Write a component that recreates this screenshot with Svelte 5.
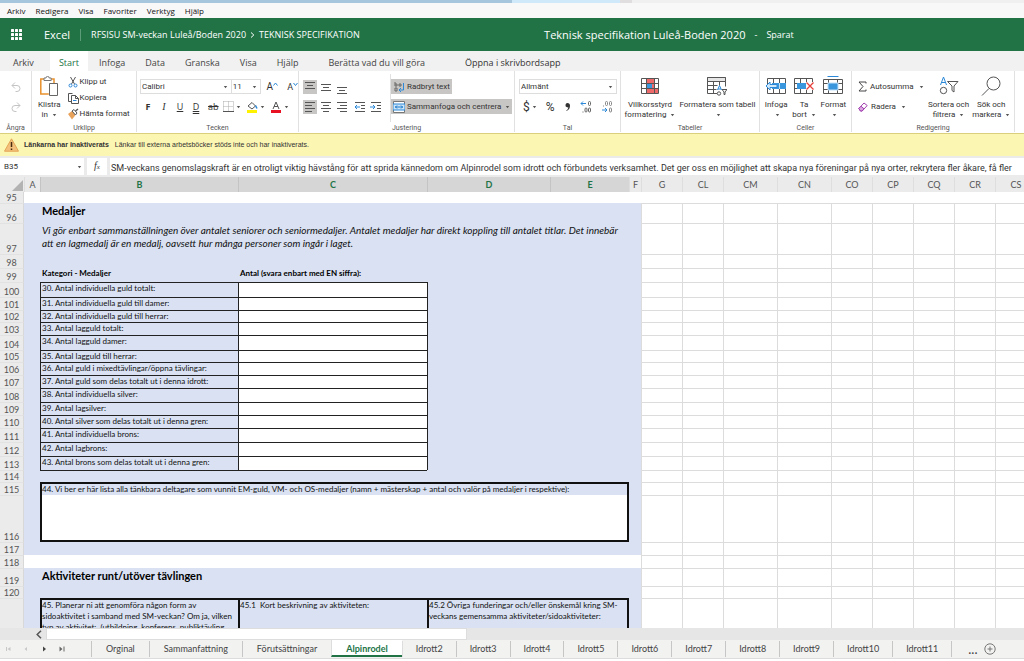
<script>
  const menus = ['Arkiv', 'Redigera', 'Visa', 'Favoriter', 'Verktyg', 'Hjälp'];
  const ribbonTabs = ['Arkiv', 'Start', 'Infoga', 'Data', 'Granska', 'Visa', 'Hjälp'];
  const sheets = ['Orginal', 'Sammanfattning', 'Förutsättningar', 'Alpinrodel', 'Idrott2', 'Idrott3', 'Idrott4', 'Idrott5', 'Idrott6', 'Idrott7', 'Idrott8', 'Idrott9', 'Idrott10', 'Idrott11'];
  const columns = [
    ['A', 16], ['B', 198], ['C', 189], ['D', 123], ['E', 79], ['F', 12], ['G', 41], ['CL', 41],
    ['CM', 54], ['CN', 54], ['CO', 41], ['CP', 41], ['CQ', 41], ['CR', 41], ['CS', 0]
  ];
  const selected = ['B', 'C', 'D', 'E'];
  const gridCells = columns.slice(6);
  const rows = [
    { n: 95, h: 11, kind: 'white first' },
    { n: 96, h: 20, kind: 'title', text: 'Medaljer' },
    { n: 97, h: 31, kind: 'note', text: 'Vi gör enbart sammanställningen över antalet seniorer och seniormedaljer. Antalet medaljer har direkt koppling till antalet titlar. Det innebär att en lagmedalj är en medalj, oavsett hur många personer som ingår i laget.' },
    { n: 98, h: 14, kind: 'blank' },
    { n: 99, h: 14, kind: 'heads', cells: ['Kategori - Medaljer', 'Antal (svara enbart med EN siffra):'] },
    { n: 100, h: 15, kind: 'item', text: '30. Antal individuella guld totalt:' },
    { n: 101, h: 13, kind: 'item', text: '31. Antal individuella guld till damer:' },
    { n: 102, h: 12, kind: 'item', text: '32. Antal individuella guld till herrar:' },
    { n: 103, h: 13, kind: 'item', text: '33. Antal lagguld totalt:' },
    { n: 104, h: 15, kind: 'item', text: '34. Antal lagguld damer:' },
    { n: 105, h: 12, kind: 'item', text: '35. Antal lagguld till herrar:' },
    { n: 106, h: 13, kind: 'item', text: '36. Antal guld i mixedtävlingar/öppna tävlingar:' },
    { n: 107, h: 13, kind: 'item', text: '37. Antal guld som delas totalt ut i denna idrott:' },
    { n: 108, h: 14, kind: 'item', text: '38. Antal individuella silver:' },
    { n: 109, h: 13, kind: 'item', text: '39. Antal lagsilver:' },
    { n: 110, h: 13, kind: 'item', text: '40. Antal silver som delas totalt ut i denna gren:' },
    { n: 111, h: 14, kind: 'item', text: '41. Antal individuella brons:' },
    { n: 112, h: 14, kind: 'item', text: '42. Antal lagbrons:' },
    { n: 113, h: 14, kind: 'item', text: '43. Antal brons som delas totalt ut i denna gren:' },
    { n: 114, h: 12, kind: 'after' },
    { n: 115, h: 13, kind: 'question', text: '44. Vi ber er här lista alla tänkbara deltagare som vunnit EM-guld, VM- och OS-medaljer (namn + mästerskap + antal och valör på medaljer i respektive):' },
    { n: 116, h: 47, kind: 'answer' },
    { n: 117, h: 13, kind: 'blank' },
    { n: 118, h: 13, kind: 'white' },
    { n: 119, h: 18, kind: 'title', text: 'Aktiviteter runt/utöver tävlingen' },
    { n: 120, h: 12, kind: 'blank' },
    { n: 121, h: 60, kind: 'trio', cells: [
      '45. Planerar ni att genomföra någon form av sidoaktivitet i samband med SM-veckan? Om ja, vilken typ av aktivitet:  (utbildning, konferens, publiktävling',
      '45.1  Kort beskrivning av aktiviteten:',
      '45.2 Övriga funderingar och/eller önskemål kring SM-veckans gemensamma aktiviteter/sidoaktiviteter:'
    ] }
  ];
  const alignRows = {
    top: [2, 5, 8], mid: [4, 7, 10], bottom: [7, 10, 13]
  };
  const formula = 'SM-veckans genomslagskraft är en otroligt viktig hävstång för att sprida kännedom om Alpinrodel som idrott och förbundets verksamhet. Det ger oss en möjlighet att skapa nya föreningar på nya orter, rekrytera fler åkare, få fler';
</script>

{#snippet caret()}
  <svg class="caret" width="5" height="4" viewBox="0 0 5 4"><path d="M.8 1h3.400L2.500 3.200z" fill="#555" /></svg>
{/snippet}

{#snippet vline(place)}
  <svg width="14" height="14" viewBox="0 0 14 14" fill="none" stroke="#555">
    {#each alignRows[place] as y, i}
      <path d={i === 1 ? `M4 ${y + .5}h6` : `M2 ${y + .5}h10`} />
    {/each}
  </svg>
{/snippet}

{#snippet hline(side)}
  <svg width="14" height="14" viewBox="0 0 14 14" fill="none" stroke="#555">
    {#if side === 'left'}<path d="M2 2.5h10M2 5.5h7M2 8.5h10M2 11.5h7" />
    {:else if side === 'center'}<path d="M2 2.5h10M4 5.5h6M2 8.5h10M4 11.5h6" />
    {:else}<path d="M2 2.5h10M5 5.5h7M2 8.5h10M5 11.5h7" />{/if}
  </svg>
{/snippet}

{#snippet indent(out)}
  <svg width="14" height="14" viewBox="0 0 14 14" fill="none">
    <path d="M2 2.5h10M8 5.5h4M8 8.5h4M2 11.5h10" stroke="#555" />
    {#if out}<path d="M7 7H2M4 5 2 7l2 2" stroke="#2b88d8" />
    {:else}<path d="M1 7h5M4 5l2 2-2 2" stroke="#2b88d8" />{/if}
  </svg>
{/snippet}

<div class="app">
  <div class="browser-tabs"><span class="inactive"></span><span class="current"></span><span class="new"></span></div>
  <nav class="menubar" aria-label="Webbläsarmeny">
    {#each menus as m}<button>{m}</button>{/each}
  </nav>

  <header class="titlebar">
    <button class="waffle" aria-label="Appar">
      <svg width="12" height="12" viewBox="0 0 12 12" fill="#fff">
        {#each [0, 4, 8] as y}{#each [0, 4, 8] as x}<rect {x} {y} width="3" height="3" rx=".5" />{/each}{/each}
      </svg>
    </button>
    <span class="brand">Excel</span>
    <div class="crumbs"><a href="#mapp">RFSISU SM-veckan Luleå/Boden 2020</a><svg width="5" height="8" viewBox="0 0 5 8"><path d="M1 1.5 3.8 4 1 6.5" fill="none" stroke="#fff" /></svg><a href="#spec">TEKNISK SPECIFIKATION</a></div>
    <div class="doc"><span class="docname">Teknisk specifikation Luleå-Boden 2020</span><span>-</span><span>Sparat</span></div>
  </header>

  <nav class="ribbon-tabs" aria-label="Menyflikar">
    {#each ribbonTabs as t}<button class:on={t === 'Start'}>{t}</button>{/each}
    <button class="tell">Berätta vad du vill göra</button>
    <button class="desktop">Öppna i skrivbordsapp</button>
  </nav>

  <div class="ribbon">
    <section class="group undo">
      <div class="body">
        <button aria-label="Ångra"><svg width="12" height="12" viewBox="0 0 12 12" fill="none" stroke="#c4c4c4"><path d="M5 1.5 2 4.5l3 3M2 4.5h5a3 3 0 0 1 0 6H5.5" /></svg></button>
        <button aria-label="Gör om"><svg width="12" height="12" viewBox="0 0 12 12" fill="none" stroke="#c4c4c4"><path d="m7 1.5 3 3-3 3M10 4.500H5a3 3 0 0 0 0 6h1.500" /></svg></button>
      </div>
      <h2>Ångra</h2>
    </section>

    <section class="group clip">
      <div class="body">
        <button class="big">
          <svg width="20" height="20" viewBox="0 1 20 20" fill="none">
            <path d="M5 4H1.800v15h8" stroke="#e8912d" stroke-width="1.500" /><path d="M12 4h3v4" stroke="#e8912d" stroke-width="1.500" />
            <path d="M5 5.500V3h2a1.600 1.600 0 0 1 3.200 0h2v2.500z" fill="#fff" stroke="#777" /><path d="M10.500 8.500h8v12h-8z" fill="#fff" stroke="#666" />
          </svg>
          <span>Klistra<br />in {@render caret()}</span>
        </button>
        <div class="stack">
          <button><svg width="12" height="12" viewBox="0 0 12 12" fill="none"><path d="m3.500 1 4 7M8.500 1l-4 7" stroke="#555" /><circle cx="3.500" cy="9.500" r="1.500" stroke="#2b88d8" /><circle cx="8.500" cy="9.500" r="1.500" stroke="#2b88d8" /></svg>Klipp ut</button>
          <button><svg width="12" height="12" viewBox="0 0 12 12" fill="#fff" stroke="#555"><path d="M4.500 9.500h-3v-8h4" /><path d="M4.500 3.500h4l3 3v5h-7zM8.500 3.500v3h3" /><path d="M6 8.500h3.500" stroke="#2b88d8" /></svg>Kopiera</button>
          <button><svg width="12" height="12" viewBox="0 0 12 12"><path d="M1 6 5 3l3.500 4L5 11.500z" fill="#e8a25a" /><path d="m5 3 2-1.500L10 5 8.500 7z" fill="#fff" stroke="#555" /><path d="m8.500 3 2.500-2" stroke="#555" stroke-width="1.500" /></svg>Hämta format</button>
        </div>
      </div>
      <h2>Urklipp</h2>
    </section>

    <section class="group font">
      <div class="body lines">
        <div class="line">
          <span class="pick wide"><select aria-label="Teckensnitt"><option>Calibri</option></select>{@render caret()}</span><span class="pick num"><select aria-label="Teckenstorlek"><option>11</option></select>{@render caret()}</span>
          <button class="size" aria-label="Öka teckenstorlek">A<svg width="5" height="5" viewBox="0 0 5 5"><path d="M.5 3.500 2.500 1l2 2.500" fill="none" stroke="#2b88d8" /></svg></button>
          <button class="size small" aria-label="Minska teckenstorlek">A<svg width="5" height="5" viewBox="0 0 5 5"><path d="m.5 1 2 2.500L4.500 1" fill="none" stroke="#2b88d8" /></svg></button>
        </div>
        <div class="line marks">
          <button aria-label="Fet"><b>F</b></button>
          <button aria-label="Kursiv"><i>I</i></button>
          <button aria-label="Understruken"><u>U</u></button>
          <button aria-label="Dubbelt understruken"><u class="double">D</u></button>
          <button aria-label="Genomstruken"><s>ab</s></button>
          <div class="paints">
            <button aria-label="Kantlinjer"><svg width="11" height="11" viewBox="0 0 11 11" fill="none"><path d="M.5.5h10v10M.5.500v10M5.500.500v10M.5 5.500h10" stroke="#aaa" stroke-dasharray="1 1" /><path d="M0 10.500h11" stroke="#555" /></svg>{@render caret()}</button>
            <button aria-label="Fyllningsfärg"><svg width="12" height="12" viewBox="0 0 12 12" fill="none"><path d="m2 5 4-3.500L9.500 5 6 8z" stroke="#555" /><path d="M9.500 4.500 11 7.500" stroke="#2b88d8" stroke-width="1.500" /><path d="M1 9h10v3H1z" fill="#fff200" /></svg>{@render caret()}</button>
            <button aria-label="Teckenfärg"><svg width="12" height="12" viewBox="0 0 12 12" fill="none"><path d="M3 8 6 1l3 7M4 5.500h4" stroke="#555" /><path d="M1 9h10v3H1z" fill="#e81123" /></svg>{@render caret()}</button>
          </div>
        </div>
      </div>
      <h2>Tecken</h2>
    </section>

    <section class="group align">
      <div class="body">
        <div class="lines">
          <div class="line"><button class="pressed" aria-label="Överst">{@render vline('top')}</button><button aria-label="Mitten">{@render vline('mid')}</button><button aria-label="Nederst">{@render vline('bottom')}</button></div>
          <div class="line"><button class="pressed" aria-label="Vänster">{@render hline('left')}</button><button aria-label="Centrera">{@render hline('center')}</button><button aria-label="Höger">{@render hline('right')}</button><button class="shift" aria-label="Minska indrag">{@render indent(true)}</button><button aria-label="Öka indrag">{@render indent(false)}</button></div>
        </div>
        <div class="lines wrap">
          <button class="pressed text"><svg width="12" height="12" viewBox="0 0 12 12" fill="none"><path d="M2 1v4h2V3H2M6 3h2v2H6zM2 7h2v3H2z" stroke="#666" /><path d="M10.500 2v7H6M8 7 6 9l2 2" stroke="#2b88d8" /></svg>Radbryt text</button>
          <button class="pressed text"><svg width="12" height="12" viewBox="0 0 12 12" fill="none"><path d="M.5.500h11v11H.500z" fill="#fff" stroke="#777" /><path d="M0 3h12v6H0z" fill="#cfe6f8" stroke="#2b88d8" /><path d="M2 6h8M4 4.500 2.500 6 4 7.500M8 4.500 9.500 6 8 7.500" stroke="#1979ca" /></svg>Sammanfoga och centrera {@render caret()}</button>
        </div>
      </div>
      <h2>Justering</h2>
    </section>

    <section class="group number">
      <div class="body lines">
        <div class="line"><span class="pick full"><select aria-label="Talformat"><option>Allmänt</option></select>{@render caret()}</span></div>
        <div class="line signs">
          <button>$ {@render caret()}</button><button>%</button>
          <button aria-label="Tusentalsavgränsare"><svg width="7" height="10" viewBox="0 0 7 10"><path d="M3.500 1a2.200 2.200 0 0 0-.5 4.300c.7.200 1.100 0 1.300-.1-.1 1.500-.9 2.500-2.100 3.300l.4.600C4.800 8 6 6.200 6 3.800 6 2 5 1 3.500 1z" fill="#333" /></svg></button>
          <button aria-label="Öka decimal"><svg width="12" height="12" viewBox="0 0 12 12" fill="none"><path d="M6 2.500H1M3 .5l-2 2 2 2" stroke="#2b88d8" /><rect x="8.500" y=".5" width="2" height="4" rx="1" stroke="#666" /><path d="M2.500 11h1" stroke="#666" /><rect x="5" y="7" width="2" height="4" rx="1" stroke="#666" /><rect x="8.500" y="7" width="2" height="4" rx="1" stroke="#666" /></svg></button>
          <button aria-label="Minska decimal"><svg width="12" height="12" viewBox="0 0 12 12" fill="none"><path d="M1 9h5M4 7l2 2-2 2" stroke="#2b88d8" /><path d="M2 5h1" stroke="#888" /><rect x="4.500" y=".5" width="2" height="4" rx="1" stroke="#888" /><rect x="8.500" y=".5" width="2" height="4" rx="1" stroke="#888" /><rect x="8.500" y="7" width="2" height="4" rx="1" stroke="#888" /></svg></button>
        </div>
      </div>
      <h2>Tal</h2>
    </section>

    <section class="group tables">
      <div class="body">
        <button class="big">
          <svg width="20" height="20" viewBox="0 0 20 20" fill="none"><path d="M1 3h18v15H1z" fill="#fff" /><path d="M6 3h9v5H6zM6 13h12v5H6z" fill="#ee6a6a" /><path d="M6 8h6v5H6z" fill="#3a96dd" /><path d="M12 8h3v5h-3z" fill="#ee6a6a" /><path d="M1.500 2.500h17v15h-17zM6.500 2.500v15M14.500 2.500v15M1.500 7.500h17M1.500 12.500h17" stroke="#555" /></svg>
          <span>Villkorsstyrd<br />formatering {@render caret()}</span>
        </button>
        <button class="big">
          <svg width="20" height="20" viewBox="0 0 20 20" fill="none"><path d="M10 17.500H.5V1.500h18v9M.5 5.500h18M.5 9.500h10M.5 13.500h9M6.500 5.500v12M12.500 5.500v4" stroke="#555" /><path d="M.5 1.500h18v4H.500z" fill="#e6e6e6" stroke="#555" /><path d="m10.500 14 2-4.500 2 4.500M11 13h3" stroke="#2b88d8" /><circle cx="12" cy="17.500" r="1.700" stroke="#555" /><path d="M15 13.500h5l-2 2.500v2.500h-1V16z" fill="#fff" stroke="#555" /></svg>
          <span>Formatera som tabell<br />{@render caret()}</span>
        </button>
      </div>
      <h2>Tabeller</h2>
    </section>

    <section class="group cells">
      <div class="body">
        <button class="big">
          <svg width="22" height="20" viewBox="0 0 22 20" fill="none"><path d="M2.500 2.500h18v15h-18zM8.500 2.500v15M14.500 2.500v15" stroke="#555" /><path d="M7 7h14v6H7z" fill="#3a96dd" /><path d="M14.500 7v6" stroke="#bfdff7" /><path d="m1 10 4-4v2.500h7v3H5V14z" fill="#cfe8fa" stroke="#2b88d8" /></svg>
          <span>Infoga<br />{@render caret()}</span>
        </button>
        <button class="big">
          <svg width="22" height="20" viewBox="0 0 22 20" fill="none"><path d="M1.500 2.500h18v15h-18zM7.500 2.500v15M13.500 2.500v15M1.500 7.500h18M1.500 12.500h18" stroke="#555" /><path d="M4 7h9v6H4z" fill="#3a96dd" /><path d="M13 6h8v8h-8z" fill="#fff" /><path d="m13.500 6.500 7 7M20.500 6.500l-7 7" stroke="#e8413b" stroke-width="1.300" /></svg>
          <span>Ta<br />bort {@render caret()}</span>
        </button>
        <button class="big">
          <svg width="20" height="20" viewBox="0 0 20 20" fill="none"><path d="M4.500.500h11" stroke="#2b88d8" /><path d="M.5 3.500h19v14H.500zM5.500 3.500v14M14.500 3.500v14M.5 7.500h19M.5 13.500h19" stroke="#555" /><path d="M5 7h10v7H5z" fill="#3a96dd" stroke="#bfdff7" /></svg>
          <span>Format<br />{@render caret()}</span>
        </button>
      </div>
      <h2>Celler</h2>
    </section>

    <section class="group edit">
      <div class="body">
        <div class="lines">
          <button><svg width="9" height="11" viewBox="0 0 9 11"><path d="M8 2.500V1H1l4 4.500L1 10h7V8.500" fill="none" stroke="#444" /></svg>Autosumma {@render caret()}</button>
          <button><svg width="10" height="10" viewBox="0 0 10 10"><path d="M.8 6.500 6 1l3.200 2.500-5 5.500H2.500z" fill="#fff" stroke="#a03fae" /><path d="M.8 6.500 3 4.200l3 2.600-2 2.200H2.500z" fill="#d9a6e0" stroke="#a03fae" /></svg>Radera {@render caret()}</button>
        </div>
        <button class="big">
          <svg width="20" height="20" viewBox="0 0 20 20" fill="none"><path d="m1.500 9 3-8 3 8M2.500 6.500h4" stroke="#2b88d8" /><circle cx="4.500" cy="14.500" r="3.200" stroke="#555" /><path d="M8.500 5.500H19L15 10v6l-2-1.500V10z" stroke="#555" /></svg>
          <span>Sortera och<br />filtrera {@render caret()}</span>
        </button>
        <button class="big">
          <svg width="22" height="20" viewBox="0 0 22 20" fill="none" stroke="#555"><circle cx="13.500" cy="7.500" r="6.500" /><path d="m9 12.500-7 7" /></svg>
          <span>Sök och<br />markera {@render caret()}</span>
        </button>
      </div>
      <h2>Redigering</h2>
    </section>
  </div>

  <div class="notice" role="status">
    <svg width="15" height="14" viewBox="0 0 15 14"><path d="M7.500.800 14.500 13.200H.500z" fill="#f3c17c" stroke="#e2a455" /><path d="M7.500 4v5M7.500 10.500v1.500" stroke="#4a2d10" stroke-width="1.500" /></svg>
    <b>Länkarna har inaktiverats</b><span>Länkar till externa arbetsböcker stöds inte och har inaktiverats.</span>
  </div>

  <div class="formula-bar">
    <span class="namebox"><input aria-label="Namnruta" value="B35" />{@render caret()}</span>
    <button class="fx" aria-label="Infoga funktion"><i>f<sub>x</sub></i></button>
    <input class="formula" aria-label="Formelfält" value={formula} />
  </div>

  <div class="sheet">
    <table>
      <colgroup>
        <col style="width:24px" />
        {#each columns as [, w]}<col style={w ? `width:${w}px` : ''} />{/each}
      </colgroup>
      <thead>
        <tr>
          <th class="corner" aria-label="Markera allt"><svg width="11" height="11" viewBox="0 0 11 11"><path d="M11 0v11H0z" fill="#b3b3b3" /></svg></th>
          {#each columns as [name]}<th scope="col" class:sel={selected.includes(name)}>{name}</th>{/each}
        </tr>
      </thead>
      <tbody>
        {#each rows as r}
          <tr class={r.kind} style="height:{r.h}px">
            <th scope="row">{r.n > 120 ? '' : r.n}</th>
            <td class="fill"></td>
            {#if r.kind === 'title' || r.kind === 'note' || r.kind === 'question' || r.kind === 'answer'}
              <td class="fill main" colspan="4">{r.text ?? ''}</td>
            {:else if r.kind === 'heads'}
              <td class="fill">{r.cells[0]}</td><td class="fill">{r.cells[1]}</td><td class="fill" colspan="2"></td>
            {:else if r.kind === 'item'}
              <td class="fill label">{r.text}</td><td class="entry"></td><td class="fill edge" colspan="2"></td>
            {:else if r.kind === 'after'}
              <td class="fill ruled" colspan="2"></td><td class="fill" colspan="2"></td>
            {:else if r.kind === 'trio'}
              <td class="fill box">{r.cells[0]}</td><td class="fill box">{r.cells[1]}</td><td class="fill box last" colspan="2">{r.cells[2]}</td>
            {:else}
              <td class="fill" colspan="4"></td>
            {/if}
            <td class="fill"></td>
            {#each gridCells as _}<td class="grid"></td>{/each}
          </tr>
        {/each}
      </tbody>
    </table>
  </div>

  <div class="scroll">
    <button aria-label="Rulla åt vänster"><svg width="6" height="9" viewBox="0 0 6 9"><path d="M5 .8 1.200 4.500 5 8.200" fill="none" stroke="#555" stroke-width="1.500" /></svg></button>
    <div class="thumb"></div>
  </div>

  <nav class="sheets" aria-label="Blad">
    <div class="steps">
      <button aria-label="Första"><svg width="6" height="6" viewBox="0 0 6 6" fill="#c8c8c8"><path d="M1 1h1v4H1zM5.500 1v4L2.500 3z" /></svg></button>
      <button aria-label="Föregående"><svg width="6" height="6" viewBox="0 0 6 6" fill="#c8c8c8"><path d="M4 1v4L1.500 3z" /></svg></button>
      <button aria-label="Nästa"><svg width="6" height="6" viewBox="0 0 6 6" fill="#444"><path d="M2 .5v5L5 3z" /></svg></button>
      <button aria-label="Sista"><svg width="6" height="6" viewBox="0 0 6 6" fill="#666"><path d="M.5.500v5L3.500 3zM4.500.500h1v5h-1z" /></svg></button>
    </div>
    {#each sheets as s}<button class="tab" class:on={s === 'Alpinrodel'} class:short={s.startsWith('Idrott')}>{s}</button>{/each}
    <button class="more" aria-label="Fler blad">...</button>
    <button aria-label="Nytt blad"><svg width="12" height="12" viewBox="0 0 12 12" fill="none" stroke="#777"><circle cx="6" cy="6" r="5.200" /><path d="M6 3.500v5M3.500 6h5" /></svg></button>
  </nav>
</div>

<style>
  :global(body) { margin: 0; }
  .app { display: flex; flex-direction: column; height: 100vh; overflow: hidden; background: #fff; color: #333; font: 8px/10px "Roboto", sans-serif; white-space: nowrap; }
  button, input, select { font: inherit; color: inherit; background: none; border: 0; padding: 0; margin: 0; white-space: nowrap; }
  button { display: inline-flex; align-items: center; justify-content: center; flex: none; }
  svg { flex: none; display: block; }
  .app :global(.caret) { display: inline-block; vertical-align: middle; margin-left: 2px; }
  a { color: inherit; text-decoration: none; }

  .browser-tabs { display: flex; height: 3px; flex: none; background: #f0f0f0; }
  .browser-tabs .inactive { width: 50%; background: #a5c6dd; }
  .browser-tabs .current { width: 108px; background: #cfe8fa; }
  .browser-tabs .new { width: 12px; background: #e0dede; }
  .menubar { display: flex; gap: 10px; padding-left: 7px; height: 15px; align-items: center; background: #f8f8f8; color: #111; flex: none; font: 8px/10px "Open Sans", sans-serif; }

  .titlebar { display: flex; align-items: center; height: 33px; background: #217346; color: #fff; flex: none; font: 9px/12px "Open Sans", sans-serif; }
  .waffle { width: 34px; height: 33px; }
  .brand { font-size: 11px; padding: 0 10px; }
  .crumbs { display: flex; align-items: center; gap: 4px; border-left: 1px solid #5c9c78; padding-left: 10px; width: 453px; }
  .doc { display: flex; align-items: center; gap: 9px; }
  .docname { font-size: 11px; }

  .ribbon-tabs { display: flex; height: 20px; background: #f1f1f1; flex: none; font: 9px/12px "Open Sans", sans-serif; color: #444; padding-left: 3px; }
  .ribbon-tabs button { padding: 3px 10px 0; }
  .ribbon-tabs .on { background: #fff; color: #217346; margin: 0 1px 0 6px; padding: 3px 9px 0; }
  .ribbon-tabs .tell { margin-left: 10px; }
  .ribbon-tabs .desktop { margin-left: 20px; color: #333; }

  .ribbon { display: flex; flex: none; height: 63px; border-bottom: 1px solid #d9cf7c; box-sizing: border-box; }
  .group { display: flex; flex-direction: column; justify-content: space-between; padding: 3px 0 0; border-right: 1px solid #e1e1e1; margin-bottom: 1px; box-sizing: border-box; flex: none; }
  .group h2 { margin: 0; font: 7px/7px "Roboto", sans-serif; text-align: center; color: #555; }
  .body { display: flex; }
  .group .body { height: 48px; }
  .big { flex-direction: column; justify-content: flex-start; text-align: center; gap: 4px; align-self: flex-start; padding-top: 2px; }
  .lines { display: flex; flex-direction: column; gap: 5px; padding-top: 5px; box-sizing: border-box; }
  .line { display: flex; align-items: center; height: 15px; }
  .undo { width: 32px; }
  .undo .body { flex-direction: column; gap: 8px; padding-top: 7px; box-sizing: border-box; }
  .clip { width: 105px; }
  .clip .body { gap: 6px; padding-left: 6px; }
  .stack { display: flex; flex-direction: column; align-items: flex-start; }
  .stack button { height: 16px; gap: 1px; }
  .font { width: 162px; }
  .font .body { padding-left: 3px; }
  .pick { display: flex; align-items: center; justify-content: space-between; height: 15px; border: 1px solid #ddd; box-sizing: border-box; padding: 0 3px 0 1px; }
  .pick select { appearance: none; flex: 1; min-width: 0; }
  .wide { width: 92px; }
  .num { width: 29px; border-left: 0; }
  .full { width: 98px; }
  .size { font-size: 10px; align-items: flex-start; margin-left: 6px; }
  .size.small { font-size: 9px; margin-left: 9px; }
  .marks { gap: 8px; font: 9px/12px "Open Sans", sans-serif; padding-left: 4px; }
  .marks button { min-width: 8px; }
  .marks i { font-family: "Liberation Serif", serif; font-size: 10px; }
  .double { text-decoration-style: double; }
  .paints { display: flex; gap: 5px; margin-left: -4px; }
  .align { width: 216px; }
  .align .body { padding-left: 4px; }
  .align .line { gap: 2px; }
  .shift { margin-left: 2px; }
  .pressed { background: #c8c6c4; }
  .align .lines:first-child { width: 88px; border-right: 1px solid #e1e1e1; }
  .wrap { align-items: flex-start; }
  .text { height: 15px; gap: 2px; padding: 0 2px; }
  .number { width: 106px; }
  .number .body { padding-left: 4px; }
  .signs { gap: 9px; font-size: 12px; padding-left: 4px; }
  .tables .body, .cells .body { justify-content: space-evenly; }
  .tables { width: 139px; }
  .tables .body { gap: 4px; justify-content: center; }
  .cells { width: 92px; }
  .edit { width: 163px; }
  .edit .body { gap: 3px; padding-left: 6px; }
  .edit .lines { align-items: flex-start; width: 67px; }
  .edit .lines button { height: 15px; gap: 3px; }

  .notice { display: flex; align-items: center; height: 22px; flex: none; background: #fcf6b3; font: 7px/10px "Liberation Sans", sans-serif; color: #333; padding-left: 4px; box-sizing: border-box; }
  .notice b { margin: 0 6px 0 5px; }

  .formula-bar { display: flex; gap: 3px; height: 21px; padding: 2px 0; box-sizing: border-box; background: #ebebeb; flex: none; }
  .namebox { width: 84px; display: flex; align-items: center; background: #fff; padding: 0 2px 0 4px; box-sizing: border-box; }
  .namebox input { flex: 1; min-width: 0; }
  .fx { width: 20px; background: #fff; font: 10px/12px "Liberation Serif", serif; }
  .fx sub { font-size: 7px; vertical-align: baseline; }
  .formula { flex: 1; min-width: 0; background: #fff; font-size: 9px; padding: 2px 0 0 1px; }

  .sheet { flex: 1; min-height: 0; overflow: hidden; background: #fff; }
  table { border-collapse: separate; border-spacing: 0; table-layout: fixed; width: max(100%, 1036px); font: 8px/11px "Lato", sans-serif; color: #111; }
  th, td { padding: 0; box-sizing: border-box; }
  thead th { height: 15px; background: #ebebeb; color: #555; font: 9px/14px "Lato", sans-serif; border-left: 1px solid #dedede; padding-top: 1px; }
  thead .sel { background: #d6d6d6; color: #217346; font-weight: bold; border-left-color: #c4c4c4; }
  thead .corner { border: 0; vertical-align: bottom; }
  .corner svg { margin: 0 1px 1px auto; }
  tbody th { background: #ebebeb; color: #555; font: 9px/10px "Lato", sans-serif; vertical-align: bottom; border-top: 1px solid #e2e2e2; border-right: 1px solid #d8d8d8; }
  tbody .first th { border-top: 0; }
  .fill { background: #d9e1f2; }
  .white .fill { background: #fff; }
  td { vertical-align: top; padding-left: 2px; }
  .grid { border-left: 1px solid #dcdcdc; border-top: 1px solid #dcdcdc; }
  .first .grid { border: 0; }
  .title .main { font-size: 11px; font-weight: bold; line-height: 14px; color: #000; padding-top: 1px; }
  .note .main { font-size: 10px; line-height: 13px; font-style: italic; white-space: normal; padding-top: 1px; }
  .heads { font-weight: bold; color: #000; }
  .label, .entry { border-left: 1px solid #222; border-top: 1px solid #222; padding-left: 1px; }
  .edge { border-left: 1px solid #222; }
  .ruled { border-top: 1px solid #222; }
  .question .main { border: 2px solid #111; border-bottom: 0; padding-left: 0; }
  .answer .main { border: 2px solid #111; border-top: 0; background: #fff; }
  .box { border-left: 2px solid #111; border-top: 2px solid #111; white-space: pre-wrap; padding-left: 0; }
  .last { border-right: 2px solid #111; }

  .scroll { display: flex; height: 12px; flex: none; background: #e6e6e6; padding-left: 32px; }
  .scroll button { width: 14px; }
  .thumb { width: 421px; background: #fff; border: 1px solid #ddd; box-sizing: border-box; }

  .sheets { display: flex; align-items: center; height: 19px; margin-bottom: 2px; flex: none; background: #f2f2f1; font: 9px/12px "Lato", sans-serif; color: #444; padding-bottom: 1px; border-bottom: 1px solid #dcdcdc; box-sizing: border-box; }
  .steps { display: flex; gap: 12px; width: 91px; padding-left: 5px; box-sizing: border-box; }
  .tab { height: 16px; padding: 0 14px; border-left: 1px solid #c6c6c6; }
  .tab.short { padding: 0 13px; }
  .tab.on { background: #fff; color: #217346; font-weight: bold; border-left-color: #ddd; border-bottom: 2px solid #217346; height: 17px; padding-top: 2px; box-sizing: border-box; }
  .tab.on + .tab { border-left-color: #ddd; }
  .more { border-left: 1px solid #c6c6c6; height: 16px; padding: 0 7px 0 16px; font-size: 13px; }
</style>
